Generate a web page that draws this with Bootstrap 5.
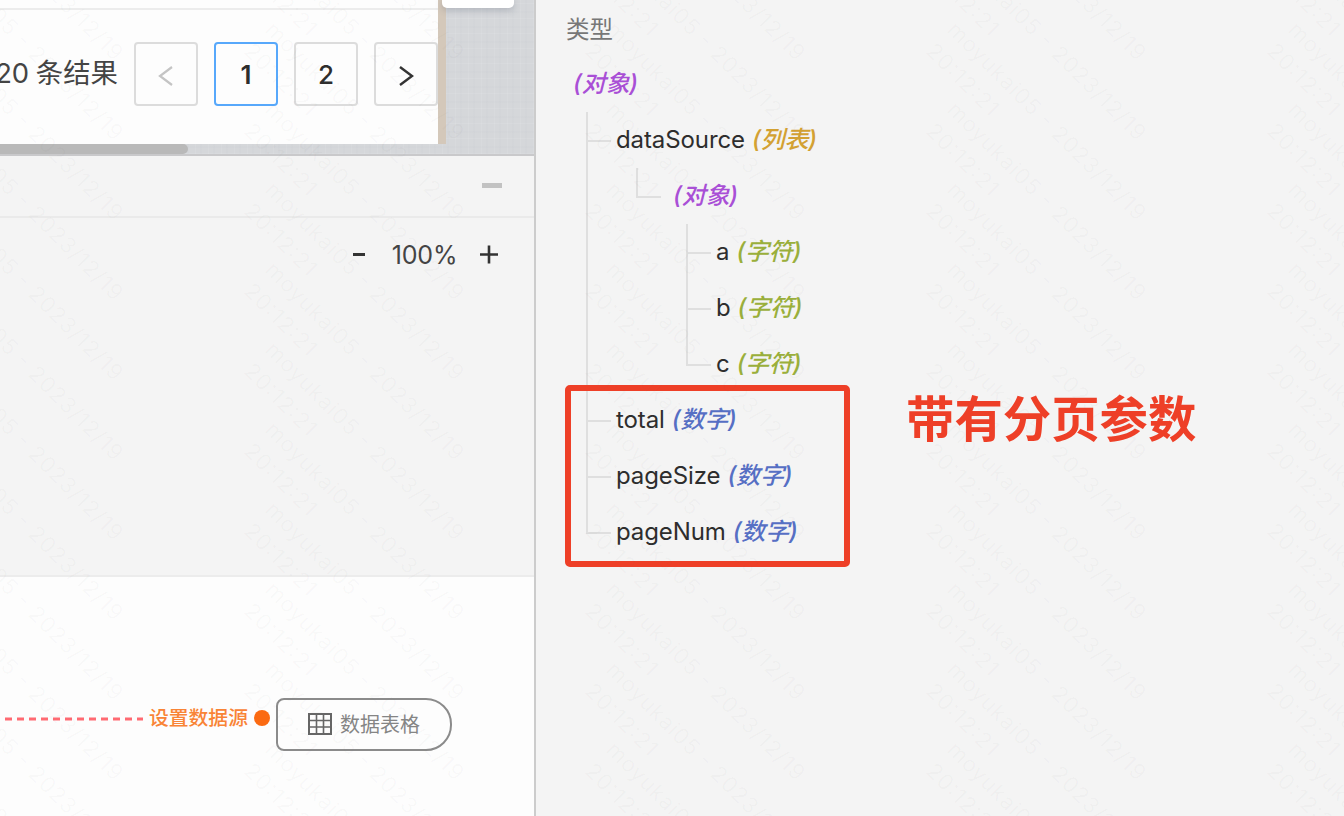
<!DOCTYPE html>
<html lang="zh-CN">
<head>
<meta charset="utf-8">
<meta name="viewport" content="width=device-width, initial-scale=1">
<title>数据源类型</title>
<link rel="stylesheet" href="https://cdn.jsdelivr.net/npm/bootstrap@5.3.0/dist/css/bootstrap.min.css">
<style>
  body { font-family: Inter, "Noto Sans CJK SC", sans-serif; background: #f4f4f4; color: #333; }
  .workspace { height: 816px; }
  .left-pane { width: 536px; border-right: 2px solid #ccc; }

  /* page preview on a woven backdrop */
  .preview { height: 156px; border-bottom: 2px solid #c9c9cb; background:
    repeating-linear-gradient(90deg, rgba(255,255,255,.08) 0 1px, transparent 1px 5px, rgba(130,140,160,.025) 5px 7px, transparent 7px 13px),
    repeating-linear-gradient(0deg, rgba(255,255,255,.08) 0 1px, transparent 1px 6px, rgba(130,140,160,.025) 6px 8px, transparent 8px 15px),
    #d5d7da; }
  .sheet { width: 446px; height: 144px; background: #fdfdfd; border-right: 8px solid #d4c8ba; }
  .sheet-rule { height: 10px; border-bottom: 2px solid #ececec; }
  .pager { height: 128px; gap: 16px; font-size: 26px; }
  .pager-total { white-space: nowrap; color: #444; font-size: 27.4px; word-spacing: -1px; padding-bottom: 1px; }
  .pager-btn { width: 64px; height: 64px; border: 2px solid #dcdcdc; border-radius: 4px; background: #fdfdfd; color: #2d2d2d; font-weight: 500; padding: 0; }
  .pager-btn svg { margin: -2px; }
  .pager-btn.current { border-color: #57a8fb; font-weight: 600; }
  .scroll-thumb { width: 188px; height: 10px; background: #b9b9b9; border-radius: 0 5px 5px 0; }
  .float-tab { left: 442px; top: 0; width: 72px; height: 8px; background: #fff; border-radius: 0 0 5px 5px; box-shadow: 0 2px 7px rgba(80,90,110,.3); }

  .panel-bar { height: 62px; border-bottom: 2px solid #eaeaea; padding-right: 32px; padding-bottom: 2px; }
  .collapse-mark { width: 20px; height: 5px; background: #c2c2c2; }
  .zoom-area { height: 359px; border-bottom: 2px solid #ececec; padding: 19px 36px 0 0; font-size: 25px; line-height: 37px; }
  .zoom-value { width: 67px; margin: 0 22px 0 26px; color: #444; letter-spacing: -.2px; }

  .flow { background: #fdfdfd; }
  .flow-row { height: 53px; margin-top: 121px; }
  .flow-label { color: #f98436; font-size: 19.8px; font-weight: 500; line-height: 40px; margin-left: 6px; white-space: nowrap; }
  .flow-dot { width: 16px; height: 16px; background: #fb6a12; margin: 12px 6px 0 6px; }
  .flow-node { width: 176px; height: 53px; border: 2px solid #8b8b8b; border-radius: 8px 26px 26px 8px; padding-left: 30px; padding-bottom: 1px; gap: 8px; color: #858585; font-size: 20px; }
  .flow-node span { padding-top: 2px; }

  /* type tree */
  .type-pane { padding-left: 30px; font-size: 24px; }
  .pane-title { height: 56px; font-size: 23.5px; color: #777; padding-top: 4px; }
  .tree-line { height: 56px; color: #2d2d2d; white-space: nowrap; }
  .tree ul { list-style: none; margin: 0; padding: 0 0 0 20px; }
  .tree li { padding-left: 30px; background:
    linear-gradient(#dfdfdf,#dfdfdf) 0 0 / 2px 100% no-repeat,
    linear-gradient(#dfdfdf,#dfdfdf) 0 28px / 25px 2px no-repeat; }
  .tree li:last-child { background-size: 2px 30px, 25px 2px; }
  .field-name { letter-spacing: -.1px; }
  .kind { font-style: italic; font-weight: 500; margin-left: 7px; font-size: 24px; letter-spacing: -.2px; }
  .k-object { color: #a94fd6; } .k-list { color: #d3a132; } .k-string { color: #9aaf3b; } .k-number { color: #566fc4; }

  .note-frame { left: 565px; top: 385px; width: 285px; height: 182px; border: 6px solid #ee3f27; border-radius: 5px; }
  .note-text { left: 906px; top: 384px; font-size: 48.4px; line-height: 72px; font-weight: 700; color: #ee3f27; white-space: nowrap; }
  .watermark { inset: 0; pointer-events: none; font-family: Inter, sans-serif; font-size: 22px; font-weight: 400; }
  .watermark text { fill: rgba(110,110,110,.035); }
</style>
</head>
<body>
<main class="workspace d-flex position-relative overflow-hidden">
  <section class="left-pane d-flex flex-column flex-shrink-0">
    <div class="preview position-relative flex-shrink-0">
      <div class="sheet overflow-hidden">
        <div class="sheet-rule"></div>
        <div class="pager d-flex align-items-center justify-content-end">
          <span class="pager-total">20 条结果</span>
          <button class="pager-btn flex-shrink-0" aria-label="上一页"><svg width="64" height="64" viewBox="0 0 64 64"><path d="M38 25 26 34l12 9" fill="none" stroke="#c4c4c4" stroke-width="2.2"/></svg></button>
          <button class="pager-btn current flex-shrink-0">1</button>
          <button class="pager-btn flex-shrink-0">2</button>
          <button class="pager-btn flex-shrink-0" aria-label="下一页"><svg width="64" height="64" viewBox="0 0 64 64"><path d="M26 25 38 34 26 43" fill="none" stroke="#333" stroke-width="2.4"/></svg></button>
        </div>
      </div>
      <div class="scroll-thumb"></div>
      <div class="float-tab position-absolute"></div>
    </div>
    <div class="panel-bar d-flex align-items-center justify-content-end flex-shrink-0"><span class="collapse-mark"></span></div>
    <div class="zoom-area d-flex align-items-start justify-content-end flex-shrink-0">
      <svg width="12" height="36"><path d="M0 17.5h12" stroke="#333" stroke-width="3"/></svg>
      <span class="zoom-value text-center">100%</span>
      <svg width="18" height="36"><path d="M0 17.5h18M9 8.5v18" stroke="#333" stroke-width="2.6"/></svg>
    </div>
    <div class="flow flex-grow-1">
      <div class="flow-row d-flex">
        <svg width="143" height="40"><path d="M-7 21h150" stroke="#ff6a72" stroke-width="3" stroke-dasharray="7 5"/></svg>
        <span class="flow-label">设置数据源</span>
        <span class="flow-dot rounded-circle flex-shrink-0"></span>
        <div class="flow-node d-flex align-items-center">
          <svg width="24" height="22" viewBox="0 0 24 22" fill="none" stroke="#666" stroke-width="2"><path d="M1 1h22v20H1z"/><path d="M1 7.5h22M1 14h22M8.5 1v20M15.5 1v20" stroke-width="1.6"/></svg>
          <span>数据表格</span>
        </div>
      </div>
    </div>
  </section>

  <section class="type-pane flex-grow-1">
    <div class="pane-title d-flex align-items-center">类型</div>
    <div class="tree">
      <div class="tree-line d-flex align-items-center"><span class="kind k-object">(对象)</span></div>
      <ul>
        <li>
          <div class="tree-line d-flex align-items-center"><span class="field-name">dataSource</span><span class="kind k-list">(列表)</span></div>
          <ul>
            <li>
              <div class="tree-line d-flex align-items-center"><span class="kind k-object">(对象)</span></div>
              <ul>
                <li><div class="tree-line d-flex align-items-center"><span class="field-name">a</span><span class="kind k-string">(字符)</span></div></li>
                <li><div class="tree-line d-flex align-items-center"><span class="field-name">b</span><span class="kind k-string">(字符)</span></div></li>
                <li><div class="tree-line d-flex align-items-center"><span class="field-name">c</span><span class="kind k-string">(字符)</span></div></li>
              </ul>
            </li>
          </ul>
        </li>
        <li><div class="tree-line d-flex align-items-center"><span class="field-name">total</span><span class="kind k-number">(数字)</span></div></li>
        <li><div class="tree-line d-flex align-items-center"><span class="field-name">pageSize</span><span class="kind k-number">(数字)</span></div></li>
        <li><div class="tree-line d-flex align-items-center"><span class="field-name">pageNum</span><span class="kind k-number">(数字)</span></div></li>
      </ul>
    </div>
  </section>

  <div class="note-frame position-absolute"></div>
  <div class="note-text position-absolute">带有分页参数</div>
  <svg class="watermark position-absolute" width="1344" height="816" aria-hidden="true"></svg>
</main>
<script src="https://cdn.jsdelivr.net/npm/bootstrap@5.3.0/dist/js/bootstrap.bundle.min.js"></script>
<script>
  // Repeat the diagonal user/time stamp over the whole workspace
  let stamps = '';
  for (let x = -77; x < 1344; x += 341) {
    for (let y = -129; y < 816; y += 80) {
      stamps += `<g transform="translate(${x} ${y}) rotate(45)"><text textLength="270">moyukai05 - 2023/12/19</text><text y="30" textLength="92">20:12:21</text></g>`;
    }
  }
  document.querySelector('.watermark').innerHTML = stamps;
</script>
</body>
</html>
